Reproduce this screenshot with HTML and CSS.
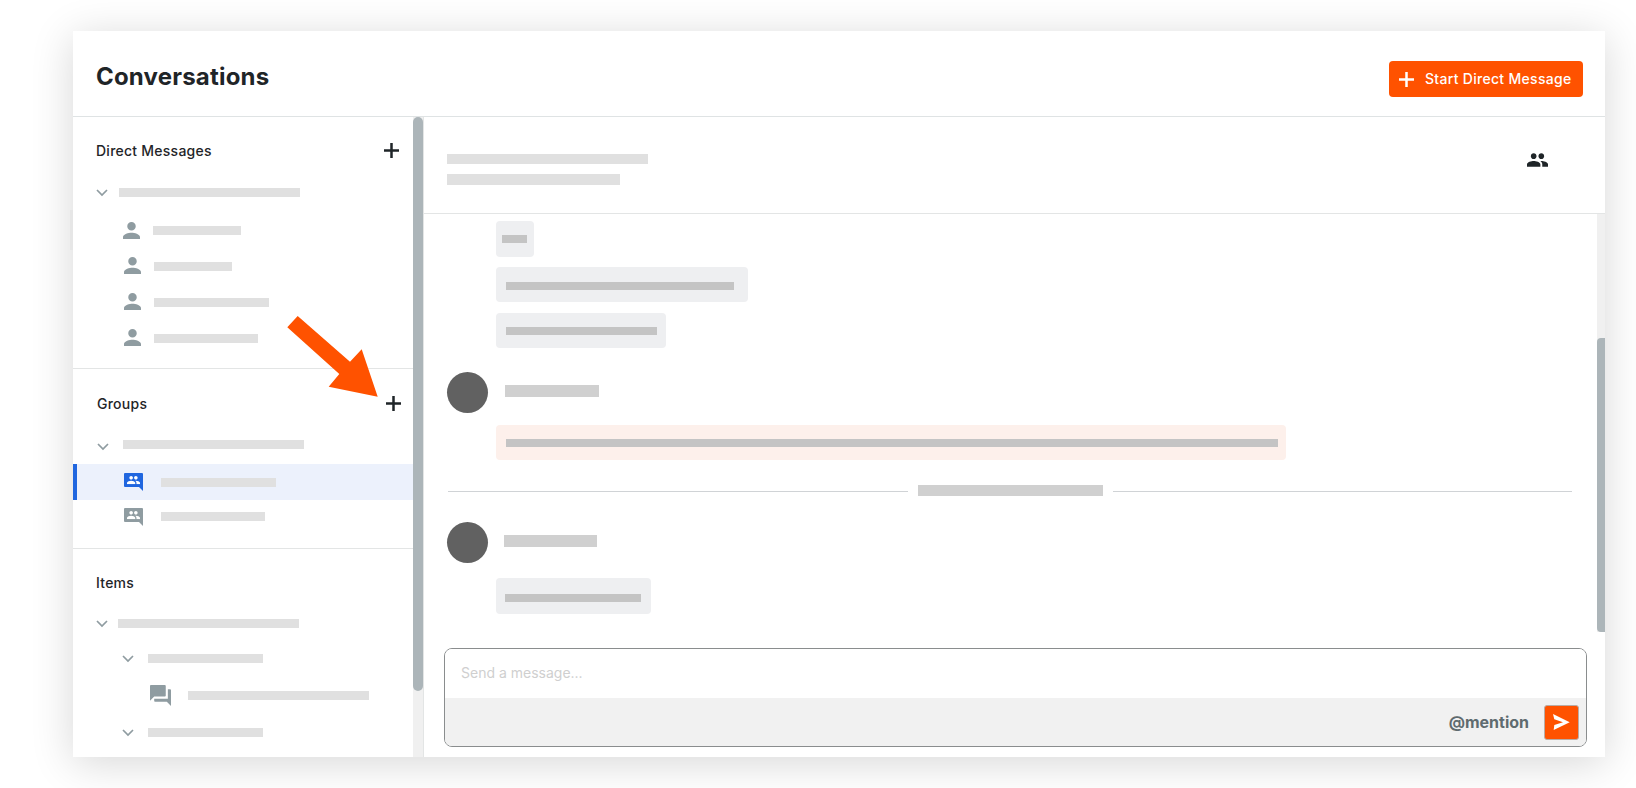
FILE: index.html
```html
<!DOCTYPE html>
<html lang="en">
<head>
<meta charset="utf-8">
<title>Conversations</title>
<link rel="stylesheet" href="styles.css">
</head>
<body>
<div class="page">
  <div class="card">
    <span class="edge-tab"></span>
    <header class="top">
      <h1 class="title">Conversations</h1>
      <button class="start-btn">
        <svg class="plus-ico" viewBox="0 0 15 15"><path d="M7.5 0v15M0 7.5h15"/></svg>
        <span>Start Direct Message</span>
      </button>
    </header>
    <div class="columns">
      <aside class="side">
        <div class="side-list">
          <section class="sec sec-dm">
            <div class="sec-head"><span>Direct Messages</span><svg class="plus-ico dark" viewBox="0 0 15 15"><path d="M7.5 0v15M0 7.5h15"/></svg></div>
            <div class="row r-top">
              <svg class="chev" viewBox="0 0 12 8"><path d="M1 1l5 5 5-5"/></svg>
              <span class="bar" style="width:181px"></span>
            </div>
            <div class="people">
              <div class="row person p1"><svg class="ico-person" viewBox="4 4 16 16"><path d="M12 12c2.21 0 4-1.79 4-4s-1.79-4-4-4-4 1.79-4 4 1.79 4 4 4zm0 2c-2.67 0-8 1.34-8 4v2h16v-2c0-2.66-5.33-4-8-4z"/></svg><span class="bar" style="width:88px"></span></div>
              <div class="row person"><svg class="ico-person" viewBox="4 4 16 16"><path d="M12 12c2.21 0 4-1.79 4-4s-1.79-4-4-4-4 1.79-4 4 1.79 4 4 4zm0 2c-2.67 0-8 1.34-8 4v2h16v-2c0-2.66-5.33-4-8-4z"/></svg><span class="bar" style="width:78px"></span></div>
              <div class="row person"><svg class="ico-person" viewBox="4 4 16 16"><path d="M12 12c2.21 0 4-1.79 4-4s-1.79-4-4-4-4 1.79-4 4 1.79 4 4 4zm0 2c-2.67 0-8 1.34-8 4v2h16v-2c0-2.66-5.33-4-8-4z"/></svg><span class="bar" style="width:115px"></span></div>
              <div class="row person"><svg class="ico-person" viewBox="4 4 16 16"><path d="M12 12c2.21 0 4-1.79 4-4s-1.79-4-4-4-4 1.79-4 4 1.79 4 4 4zm0 2c-2.67 0-8 1.34-8 4v2h16v-2c0-2.66-5.33-4-8-4z"/></svg><span class="bar" style="width:104px"></span></div>
            </div>
          </section>
          <section class="sec sec-groups">
            <div class="sec-head shifted"><span>Groups</span><svg class="plus-ico dark" viewBox="0 0 15 15"><path d="M7.5 0v15M0 7.5h15"/></svg></div>
            <div class="row r-group">
              <svg class="chev low" viewBox="0 0 12 8"><path d="M1 1l5 5 5-5"/></svg>
              <span class="bar" style="width:181px"></span>
            </div>
            <div class="row group selected">
              <svg class="ico-group" viewBox="0 0 19 18"><path class="bubble-shape" d="M1 0h17a1 1 0 0 1 1 1v17l-4-4H1a1 1 0 0 1-1-1V1a1 1 0 0 1 1-1z"/><svg x="3" y="3" width="13" height="8.3" viewBox="1 5 22 14"><path class="people-shape" d="M16 11c1.66 0 2.99-1.34 2.99-3S17.66 5 16 5c-1.66 0-3 1.34-3 3s1.34 3 3 3zm-8 0c1.66 0 2.99-1.34 2.99-3S9.66 5 8 5C6.34 5 5 6.34 5 8s1.34 3 3 3zm0 2c-2.33 0-7 1.17-7 3.5V19h14v-2.5c0-2.33-4.67-3.5-7-3.5zm8 0c-.29 0-.62.02-.97.05 1.16.84 1.97 1.97 1.97 3.45V19h6v-2.5c0-2.33-4.67-3.5-7-3.5z"/></svg></svg>
              <span class="bar" style="width:115px"></span>
            </div>
            <div class="row group plain">
              <svg class="ico-group" viewBox="0 0 19 18"><path class="bubble-shape" d="M1 0h17a1 1 0 0 1 1 1v17l-4-4H1a1 1 0 0 1-1-1V1a1 1 0 0 1 1-1z"/><svg x="3" y="3" width="13" height="8.3" viewBox="1 5 22 14"><path class="people-shape" d="M16 11c1.66 0 2.99-1.34 2.99-3S17.66 5 16 5c-1.66 0-3 1.34-3 3s1.34 3 3 3zm-8 0c1.66 0 2.99-1.34 2.99-3S9.66 5 8 5C6.34 5 5 6.34 5 8s1.34 3 3 3zm0 2c-2.33 0-7 1.17-7 3.5V19h14v-2.5c0-2.33-4.67-3.5-7-3.5zm8 0c-.29 0-.62.02-.97.05 1.16.84 1.97 1.97 1.97 3.45V19h6v-2.5c0-2.33-4.67-3.5-7-3.5z"/></svg></svg>
              <span class="bar" style="width:104px"></span>
            </div>
          </section>
          <section class="sec sec-items">
            <div class="sec-head"><span>Items</span></div>
            <div class="row r-items">
              <svg class="chev" viewBox="0 0 12 8"><path d="M1 1l5 5 5-5"/></svg>
              <span class="bar" style="width:181px"></span>
            </div>
            <div class="row nested">
              <svg class="chev" viewBox="0 0 12 8"><path d="M1 1l5 5 5-5"/></svg>
              <span class="bar" style="width:115px"></span>
            </div>
            <div class="row thread">
              <svg class="ico-forum" viewBox="2 2 20 20"><path d="M21 6h-2v9H6v2c0 .55.45 1 1 1h11l4 4V7c0-.55-.45-1-1-1zm-4 6V3c0-.55-.45-1-1-1H3c-.55 0-1 .45-1 1v14l4-4h10c.55 0 1-.45 1-1z"/></svg>
              <span class="bar" style="width:181px"></span>
            </div>
            <div class="row nested">
              <svg class="chev" viewBox="0 0 12 8"><path d="M1 1l5 5 5-5"/></svg>
              <span class="bar" style="width:115px"></span>
            </div>
          </section>
        </div>
        <div class="scroll side-scroll"><span class="thumb"></span></div>
      </aside>
      <main class="main">
        <div class="main-head">
          <div class="main-titles">
            <span class="bar" style="width:201px;height:10px"></span>
            <span class="bar" style="width:173px;height:11px"></span>
          </div>
          <svg class="ico-people" viewBox="1 5 22 14"><path d="M16 11c1.66 0 2.99-1.34 2.99-3S17.66 5 16 5c-1.66 0-3 1.34-3 3s1.34 3 3 3zm-8 0c1.66 0 2.99-1.34 2.99-3S9.66 5 8 5C6.34 5 5 6.34 5 8s1.34 3 3 3zm0 2c-2.33 0-7 1.17-7 3.5V19h14v-2.5c0-2.33-4.67-3.5-7-3.5zm8 0c-.29 0-.62.02-.97.05 1.16.84 1.97 1.97 1.97 3.45V19h6v-2.5c0-2.33-4.67-3.5-7-3.5z"/></svg>
        </div>
        <div class="feed-wrap">
          <div class="feed">
            <div class="bubble b1" style="width:38px"><span class="line" style="width:25px"></span></div>
            <div class="bubble b2" style="width:252px"><span class="line" style="width:228px"></span></div>
            <div class="bubble b3" style="width:170px"><span class="line" style="width:151px"></span></div>
            <div class="author a1"><span class="avatar"></span><span class="name" style="width:94px"></span></div>
            <div class="bubble b4 mine" style="width:790px"><span class="line" style="width:772px"></span></div>
            <div class="sep"><span class="sep-line"></span><span class="sep-label"></span><span class="sep-line"></span></div>
            <div class="author a2"><span class="avatar"></span><span class="name" style="width:93px"></span></div>
            <div class="bubble b5" style="width:155px"><span class="line" style="width:136px"></span></div>
          </div>
          <div class="scroll feed-scroll"><span class="thumb"></span></div>
        </div>
        <div class="composer">
          <div class="composer-input">Send a message...</div>
          <div class="composer-bar">
            <span class="mention">@mention</span>
            <button class="send" aria-label="Send"><svg viewBox="0 0 17 16"><path d="M0 0L16.7 8.3 .7 16 1.3 11 10 8.3 1.3 5.3z"/></svg></button>
          </div>
        </div>
      </main>
    </div>
    <svg class="callout" viewBox="0 0 100 90"><polygon points="5.3,2.3 15.7,-9 68,36.7 79.7,24.3 95.7,71.7 46.7,61.7 57.3,49"/></svg>
  </div>
</div>
</body>
</html>
```
FILE: styles.css
```css
* { box-sizing: border-box; }
html, body { margin: 0; padding: 0; background: #fff; }
body { font-family: Inter, "Liberation Sans", sans-serif; color: #1f2528; overflow: hidden; }
.page { width: 1636px; height: 788px; padding: 31px 31px 31px 73px; }
.card { position: relative; width: 1532px; height: 726px; background: #fff; box-shadow: 0 6px 40px rgba(0,0,0,.16); display: flex; flex-direction: column; }
.edge-tab { position: absolute; left: -3px; top: 179px; width: 3px; height: 40px; background: #e6e6e6; }

.top { height: 86px; flex: none; border-bottom: 1px solid #dfe3e4; display: flex; align-items: flex-start; justify-content: space-between; padding: 30px 22px 0 23px; }
.title { margin: 1px 0 0; font-size: 24px; line-height: 30px; font-weight: 700; letter-spacing: .2px; color: #1f2528; }
.start-btn { width: 194px; height: 36px; border: 0; border-radius: 4px; background: #ff5200; color: #fff; font: 500 14px/36px Inter, "Liberation Sans", sans-serif; letter-spacing: .3px; display: flex; align-items: center; gap: 11px; padding: 0 0 0 10px; }
.plus-ico { width: 15px; height: 15px; flex: none; fill: none; stroke: #fff; stroke-width: 2.5; }
.plus-ico.dark { stroke: #1f2528; }

.columns { flex: 1; min-height: 0; display: flex; }
.side { width: 351px; flex: none; display: flex; border-right: 1px solid #e3e5e5; }
.side-list { width: 340px; flex: none; overflow: hidden; }
.scroll { background: #f0f0f0; flex: none; display: block; }
.side-scroll { width: 10px; height: 100%; }
.side-scroll .thumb { display: block; width: 10px; height: 574px; background: #acb5b9; border-radius: 5px; }

.sec { border-bottom: 1px solid #e3e5e5; }
.sec-dm { height: 252px; padding-top: 16px; }
.sec-groups { height: 180px; padding-top: 17px; }
.sec-items { border-bottom: 0; padding-top: 16px; }
.sec-head { height: 36px; margin-top: -1px; display: flex; align-items: center; justify-content: space-between; padding: 0 14px 0 23px; font-size: 14px; font-weight: 500; letter-spacing: .25px; }
.sec-head.shifted { padding: 0 12px 0 24px; }

.row { display: flex; align-items: center; }
.bar { display: block; height: 9px; background: #e0e0e0; flex: none; }
.chev { width: 12px; height: 8px; flex: none; fill: none; stroke: #8f9ca1; stroke-width: 1.7; }
.chev.low { margin-top: 6px; }
.r-top { height: 35px; margin-top: 7px; padding-left: 23px; gap: 11px; }
.people { margin-top: 2px; }
.person { height: 36px; padding-left: 51px; gap: 13px; }
.person.p1 { padding-left: 50px; }
.ico-person { width: 17px; height: 17px; margin-bottom: 2px; fill: #8f9ca1; flex: none; }
.p1 .ico-person { margin-bottom: 0; }
.r-group { height: 36px; margin-top: 5px; padding-left: 24px; gap: 14px; }
.group { padding-left: 51px; gap: 18px; }
.group.selected { height: 36px; margin-top: 2px; background: #ecf1fc; border-left: 4px solid #2066df; padding-left: 47px; }
.group.plain { height: 33px; }
.ico-group { width: 19px; height: 18px; flex: none; }
.bubble-shape { fill: #8f9ca1; }
.selected .bubble-shape { fill: #2066df; }
.people-shape { fill: #fff; }
.r-items { height: 35px; margin-top: 6px; padding-left: 23px; gap: 10px; }
.nested { height: 35px; padding-left: 49px; gap: 14px; }
.thread { height: 39px; padding-left: 77px; gap: 17px; }
.ico-forum { width: 21px; height: 21px; fill: #8f9ca1; flex: none; }

.main { flex: 1; min-width: 0; display: flex; flex-direction: column; }
.main-head { height: 97px; flex: none; border-bottom: 1px solid #e3e5e5; padding: 0 57px 0 23px; display: flex; align-items: center; justify-content: space-between; }
.main-titles { display: flex; flex-direction: column; gap: 10px; margin-top: 9px; }
.ico-people { width: 21px; height: 14px; fill: #1f2528; margin-bottom: 10px; }
.feed-wrap { height: 418px; flex: none; display: flex; }
.feed { flex: 1; min-width: 0; overflow: hidden; padding-top: 7px; }
.feed-scroll { width: 8px; height: 100%; padding-top: 124px; }
.feed-scroll .thumb { display: block; width: 8px; height: 294px; background: #acb5b9; border-radius: 4px 0 0 4px; }

.bubble { margin-left: 72px; height: 35px; border-radius: 4px; background: #eeeff1; display: flex; align-items: flex-start; padding-left: 10px; padding-top: 15px; }
.bubble.mine { background: #fdf0eb; }
.line { display: block; height: 8px; background: #c4c4c4; flex: none; }
.b1 { height: 36px; padding-left: 6px; padding-top: 14px; }
.b2 { margin-top: 10px; }
.b3 { margin-top: 11px; padding-top: 14px; }
.b4 { margin-top: 12px; padding-top: 14px; }
.b5 { height: 36px; margin-top: 15px; padding-left: 9px; padding-top: 16px; }

.author { display: flex; align-items: center; padding-left: 23px; height: 41px; }
.a1 { margin-top: 24px; gap: 17px; }
.a2 { margin-top: 26px; gap: 16px; }
.avatar { width: 41px; height: 41px; border-radius: 50%; background: #616161; flex: none; }
.name { display: block; height: 12px; background: #d0d0d0; margin-bottom: 3px; flex: none; }

.sep { display: flex; align-items: center; gap: 10px; height: 11px; margin: 25px 25px 0 24px; }
.sep-line { flex: 1; height: 1px; background: #d0d3d6; margin-top: 1px; }
.sep-label { width: 185px; height: 11px; background: #d0d0d0; flex: none; }

.composer { margin: 16px 18px 0 20px; height: 99px; border: 1.5px solid #8a8d8e; border-radius: 8px; overflow: hidden; display: flex; flex-direction: column; }
.composer-input { height: 49px; flex: none; padding: 0 16px; font-size: 14px; line-height: 47px; color: #cfcfcf; background: #fff; }
.composer-bar { flex: 1; background: #f1f1f1; display: flex; align-items: center; justify-content: flex-end; gap: 15px; padding-right: 7px; }
.mention { font-size: 16px; font-weight: 700; color: #5f6b6f; }
.send { width: 35px; height: 35px; padding: 0; border: 1px solid #b8aca6; border-radius: 3px; background: #ff5200; display: flex; align-items: center; justify-content: center; }
.send svg { width: 17px; height: 16px; fill: #fff; }

.callout { position: absolute; left: 209px; top: 294px; width: 100px; height: 90px; overflow: visible; }
.callout polygon { fill: #ff5200; }
```
